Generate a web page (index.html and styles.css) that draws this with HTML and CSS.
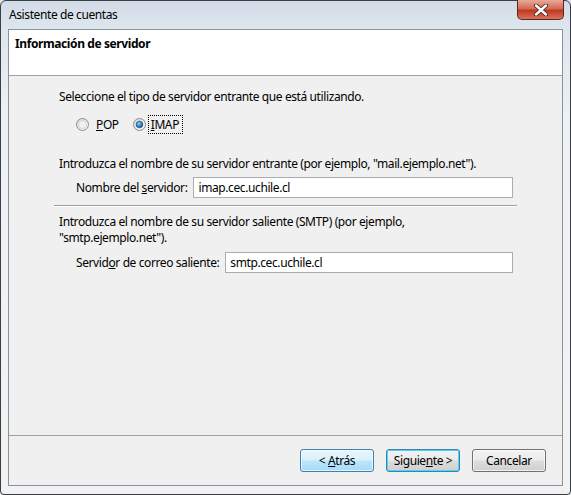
FILE: index.html
```html
<!DOCTYPE html>
<html lang="es">
<head>
  <meta charset="UTF-8">
  <title>Asistente de cuentas</title>
  <link rel="stylesheet" href="styles.css">
</head>
<body>

<div class="window">

  <!-- Title bar -->
  <div class="titlebar">
    <span class="title">Asistente de cuentas</span>
    <div class="close">
      <svg width="16" height="12" viewBox="0 0 16 12">
        <path d="M3 1.5 L13 10.5 M13 1.5 L3 10.5" fill="none" stroke="#4b2420" stroke-width="4.2" stroke-linecap="round"/>
        <path d="M3 1.5 L13 10.5 M13 1.5 L3 10.5" fill="none" stroke="#ffffff" stroke-width="2.4" stroke-linecap="round"/>
      </svg>
    </div>
  </div>

  <div class="client">

    <div class="page-header">Información de servidor</div>

    <div class="page-body">
      <p class="line">Seleccione el tipo de servidor entrante que está utilizando.</p>

      <div class="radios">
        <label class="radio">
          <svg width="13" height="13" viewBox="0 0 13 13">
            <defs>
              <linearGradient id="rg" x1="0" y1="0" x2="1" y2="1">
                <stop offset="0" stop-color="#d4d4d4"/>
                <stop offset="1" stop-color="#fbfbfb"/>
              </linearGradient>
            </defs>
            <circle cx="6.5" cy="6.5" r="6" fill="url(#rg)" stroke="#8e8f8f"/>
            <circle cx="6.5" cy="6.5" r="4" fill="#f1f1f1" stroke="#d0d0d0" stroke-width="0.8"/>
          </svg>
          <span><u>P</u>OP</span>
        </label>
        <label class="radio">
          <svg width="13" height="13" viewBox="0 0 13 13">
            <defs>
              <radialGradient id="dot" cx="0.4" cy="0.35" r="0.7">
                <stop offset="0" stop-color="#8fd0f4"/>
                <stop offset="0.6" stop-color="#2f84c0"/>
                <stop offset="1" stop-color="#174f7f"/>
              </radialGradient>
            </defs>
            <circle cx="6.5" cy="6.5" r="6" fill="url(#rg)" stroke="#8e8f8f"/>
            <circle cx="6.5" cy="6.5" r="3.3" fill="url(#dot)" stroke="#1b4a73" stroke-width="0.7"/>
          </svg>
          <span class="focus"><u>I</u>MAP</span>
        </label>
      </div>

      <p class="line gap-top">Introduzca el nombre de su servidor entrante (por ejemplo, "mail.ejemplo.net").</p>
      <div class="field">
        <span class="label">Nombre del <u>s</u>ervidor:</span>
        <input class="text-input" type="text" value="imap.cec.uchile.cl">
      </div>

      <hr class="separator">

      <p class="line two-lines">Introduzca el nombre de su servidor saliente (SMTP) (por ejemplo,<br>"smtp.ejemplo.net").</p>
      <div class="field">
        <span class="label">Servid<u>o</u>r de correo saliente:</span>
        <input class="text-input" type="text" value="smtp.cec.uchile.cl">
      </div>
    </div>

    <div class="footer">
      <button class="btn hover">&lt; <u>A</u>trás</button>
      <button class="btn default">Siguie<u>n</u>te &gt;</button>
      <button class="btn">Cancelar</button>
    </div>

  </div>
</div>

</body>
</html>
```

FILE: styles.css
```css
body {
  margin: 0;
  padding: 0;
  background: #dfe6ee;
  font-family: "Noto Sans", "Open Sans", sans-serif;
  font-size: 12px;
  letter-spacing: -0.4px;
  color: #000;
}

.window {
  box-sizing: border-box;
  width: 571px;
  height: 495px;
  border: 1px solid #3a3f46;
  border-radius: 6px 6px 4px 4px;
  background: linear-gradient(#d2dce7, #dfe6ee 30px, #eef1f4 120px, #f2f2f2);
  display: flex;
  flex-direction: column;
}

.titlebar {
  height: 28px;
  display: flex;
  align-items: flex-start;
}

.title {
  padding: 6px 0 0 8px;
  line-height: 15px;
}

.close {
  margin-left: auto;
  margin-right: 6px;
  margin-top: -1px;
  width: 47px;
  height: 20px;
  box-sizing: border-box;
  border: 1px solid #5b2620;
  border-top: none;
  border-radius: 0 0 5px 5px;
  background: linear-gradient(#e9a99a, #d46a55 45%, #c1371f 55%, #d9725d);
  display: flex;
  align-items: center;
  justify-content: center;
}

.client {
  flex: 1;
  margin: 0 7px 8px 7px;
  border: 1px solid #8a939d;
  background: #f0f0f0;
  display: flex;
  flex-direction: column;
}

.page-header {
  height: 46px;
  box-sizing: border-box;
  background: #fff;
  border-bottom: 1px solid #a0a0a0;
  padding: 6px 0 0 6px;
  font-weight: bold;
  line-height: 15px;
}

.page-body {
  flex: 1;
  padding: 13px 45px 0 45px;
}

.line {
  margin: 0 0 0 5px;
  line-height: 15px;
}

.two-lines {
  line-height: 16px;
  margin-top: -1px;
}

.gap-top {
  margin-top: 22px;
}

.radios {
  display: flex;
  gap: 14px;
  margin: 11px 0 0 22px;
  height: 19px;
}

.radio {
  display: flex;
  align-items: center;
  gap: 7px;
}

.radio svg {
  display: block;
}

.focus {
  outline: 1px dotted #000;
  padding: 1px 3px 1px 2px;
  margin-left: -4px;
  line-height: 15px;
}

.field {
  display: flex;
  align-items: center;
  margin: 6px 4px 0 22px;
}

.label {
  padding-right: 6px;
}

.text-input {
  flex: 1;
  height: 21px;
  box-sizing: border-box;
  border: 1px solid #abadb3;
  background: #fff;
  font-family: inherit;
  font-size: 12px;
  letter-spacing: -0.4px;
  padding: 0 4px;
  margin: 0;
  color: #000;
}

.separator {
  border: none;
  border-top: 1px solid #a0a0a0;
  border-bottom: 1px solid #fff;
  margin: 7px 0 8px 0;
}

.footer {
  border-top: 1px solid #a0a0a0;
  padding: 13px 16px 13px 0;
  display: flex;
  justify-content: flex-end;
  gap: 12px;
}

.btn {
  width: 74px;
  height: 23px;
  box-sizing: border-box;
  border: 1px solid #707070;
  border-radius: 3px;
  background: linear-gradient(#f2f2f2, #ebebeb 49%, #dddddd 51%, #cfcfcf);
  box-shadow: inset 0 0 0 1px rgba(255, 255, 255, 0.7);
  font-family: inherit;
  font-size: 12px;
  letter-spacing: -0.4px;
  color: #000;
  padding: 0;
}

.btn.hover {
  border-color: #3c7fb1;
  background: linear-gradient(#eaf6fd, #d9f0fc 49%, #bee6fd 51%, #a7d9f5);
}

.btn.default {
  border-color: #3c7fb1;
  box-shadow: inset 0 0 0 1px #48d7fc;
}
```
